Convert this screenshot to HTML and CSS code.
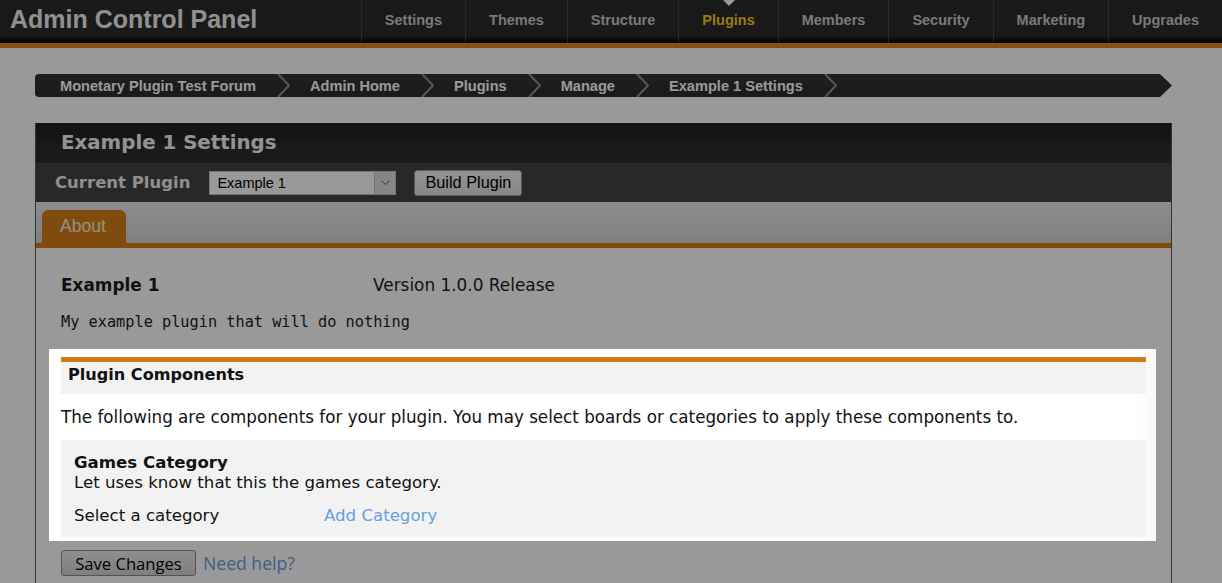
FILE: index.html
```html
<!DOCTYPE html>
<html lang="en">
<head>
<meta charset="utf-8">
<title>Admin Control Panel</title>
<link rel="stylesheet" href="styles.css">
</head>
<body>
<header class="topbar">
  <h1 class="brand">Admin Control Panel</h1>
  <nav class="mainnav">
    <a href="#">Settings</a>
    <a href="#">Themes</a>
    <a href="#">Structure</a>
    <a href="#" class="active">Plugins</a>
    <a href="#">Members</a>
    <a href="#">Security</a>
    <a href="#">Marketing</a>
    <a href="#">Upgrades</a>
  </nav>
</header>

<div class="page">
  <nav class="crumbs">
    <a class="crumb" href="#">Monetary Plugin Test Forum</a>
    <svg class="chev" viewBox="0 0 13 23"><polyline points="1,0 12,11.5 1,23" fill="none" stroke="#8f8f8f" stroke-width="2"/></svg>
    <a class="crumb" href="#">Admin Home</a>
    <svg class="chev" viewBox="0 0 13 23"><polyline points="1,0 12,11.5 1,23" fill="none" stroke="#8f8f8f" stroke-width="2"/></svg>
    <a class="crumb" href="#">Plugins</a>
    <svg class="chev" viewBox="0 0 13 23"><polyline points="1,0 12,11.5 1,23" fill="none" stroke="#8f8f8f" stroke-width="2"/></svg>
    <a class="crumb" href="#">Manage</a>
    <svg class="chev" viewBox="0 0 13 23"><polyline points="1,0 12,11.5 1,23" fill="none" stroke="#8f8f8f" stroke-width="2"/></svg>
    <a class="crumb" href="#">Example 1 Settings</a>
    <svg class="chev" viewBox="0 0 13 23"><polyline points="1,0 12,11.5 1,23" fill="none" stroke="#8f8f8f" stroke-width="2"/></svg>
  </nav>

  <section class="panel">
    <h2 class="panel-title">Example 1 Settings</h2>
    <div class="toolbar">
      <span class="toolbar-label">Current Plugin</span>
      <div class="select">
        <span class="select-value">Example 1</span>
        <span class="select-arrow"><svg width="9" height="6" viewBox="0 0 9 6"><polyline points="0.5,0.5 4.5,4.5 8.5,0.5" fill="none" stroke="#555" stroke-width="1"/></svg></span>
      </div>
      <button class="btn" type="button">Build Plugin</button>
    </div>
    <div class="tabs">
      <span class="tab">About</span>
    </div>
    <div class="panel-body">
      <div class="plugin-row">
        <span class="plugin-name">Example 1</span>
        <span class="plugin-version">Version 1.0.0 Release</span>
      </div>
      <p class="plugin-desc">My example plugin that will do nothing</p>

      <div class="spotlight">
        <div class="comp-head">Plugin Components</div>
        <p class="comp-intro">The following are components for your plugin. You may select boards or categories to apply these components to.</p>
        <div class="comp-item">
          <div class="comp-title">Games Category</div>
          <div class="comp-desc">Let uses know that this the games category.</div>
          <div class="comp-row">
            <span class="comp-label">Select a category</span>
            <a class="link" href="#">Add Category</a>
          </div>
        </div>
      </div>

      <div class="actions">
        <button class="btn-save" type="button">Save Changes</button>
        <a class="help" href="#">Need help?</a>
      </div>
    </div>
  </section>
</div>
</body>
</html>
```
FILE: styles.css
```css
html, body {
  margin: 0;
  background: #fff;
  font-family: "DejaVu Sans", Verdana, sans-serif;
  color: #1c1c1c;
  overflow: hidden;
}

/* ---------- top bar ---------- */
.topbar {
  display: flex;
  justify-content: space-between;
  height: 43px;
  background: linear-gradient(#2b2b2b 0, #2b2b2b 35px, #000 43px);
  border-bottom: 5px solid #e3861a;
}
.brand {
  margin: 0;
  padding-left: 10px;
  font: bold 25px/38px "Liberation Sans", Arial, sans-serif;
  color: #f0f0f0;
}
.mainnav {
  display: flex;
}
.mainnav a {
  position: relative;
  display: flex;
  align-items: center;
  padding: 0 23px 3px 23px;
  border-left: 1px solid #454545;
  font: bold 14.5px "Liberation Sans", Arial, sans-serif;
  color: #cacaca;
  text-decoration: none;
}
.mainnav a.active {
  color: #ffcc1b;
}
.mainnav a.active::before {
  content: "";
  position: absolute;
  top: 0;
  left: 50%;
  margin-left: -6px;
  border-left: 6px solid transparent;
  border-right: 6px solid transparent;
  border-top: 6px solid #fff;
}

/* ---------- page ---------- */
.page {
  padding: 26px 50px 0 35px;
}

.crumbs {
  display: flex;
  align-items: center;
  height: 23px;
  padding-left: 25px;
  background: linear-gradient(#343434, #2c2c2c);
  border-radius: 4px 0 0 4px;
  clip-path: polygon(0 0, calc(100% - 12px) 0, 100% 50%, calc(100% - 12px) 100%, 0 100%);
}
.crumb {
  font: bold 14.6px "Liberation Sans", Arial, sans-serif;
  color: #fff;
  text-decoration: none;
  white-space: nowrap;
}
.chev {
  width: 13px;
  height: 23px;
  margin: 0 20px 0 21px;
  flex: none;
}

/* ---------- panel ---------- */
.panel {
  margin-top: 26px;
  border-left: 1px solid #555;
  border-right: 1px solid #555;
}
.panel-title {
  margin: 0;
  height: 40px;
  padding-left: 25px;
  background: linear-gradient(#222 0, #252525 50%, #2c2c2c 50%, #2c2c2c 100%);
  font: bold 19.8px/40px "DejaVu Sans", Verdana, sans-serif;
  color: #f5f5f5;
}
.toolbar {
  display: flex;
  align-items: center;
  height: 39px;
  padding-left: 19px;
  background: #434343;
}
.toolbar-label {
  margin-right: 19px;
  font: bold 16.5px "DejaVu Sans", Verdana, sans-serif;
  color: #efefef;
}
.select {
  display: flex;
  box-sizing: border-box;
  width: 187px;
  height: 24px;
  border: 1px solid #c4c4c4;
  background: #fff;
}
.select-value {
  flex: 1;
  padding-left: 7px;
  font: 14.5px/23px "Liberation Sans", Arial, sans-serif;
  color: #000;
}
.select-arrow {
  display: flex;
  align-items: center;
  justify-content: center;
  width: 20px;
  background: #e0e0e0;
  border-left: 1px solid #c4c4c4;
}
.btn {
  height: 26px;
  margin-left: 18px;
  padding: 0 10px;
  border: 1px solid #9a9a9a;
  border-radius: 3px;
  background: linear-gradient(#f3f3f3, #e2e2e2);
  font: 16.3px "Liberation Sans", Arial, sans-serif;
  color: #000;
}

.tabs {
  display: flex;
  align-items: flex-end;
  height: 41px;
  padding-left: 6px;
  background: linear-gradient(#ececec, #d4d4d4);
  border-bottom: 5px solid #d47f16;
}
.tab {
  box-sizing: border-box;
  width: 84px;
  height: 33px;
  padding-left: 18px;
  background: #d47f16;
  border-radius: 6px 6px 0 0;
  font: 17.6px/32px "Liberation Sans", Arial, sans-serif;
  color: #f6f0e6;
}

.panel-body {
  padding: 27px 25px 60px 25px;
  background: #fff;
}
.plugin-row {
  display: flex;
  font-size: 16.9px;
  line-height: 20px;
}
.plugin-name {
  width: 312px;
  font-weight: bold;
}
.plugin-desc {
  margin: 17px 0 0;
  font: 15.25px/20px "DejaVu Sans Mono", "Liberation Mono", monospace;
}

/* highlighted area with dimmed surroundings */
.spotlight {
  position: relative;
  z-index: 5;
  margin: 17px -10px 0 -12px;
  padding: 8px 10px 4px 12px;
  background: linear-gradient(90deg, #fff 0, #fff calc(100% - 18px), #f7f7f7 100%);
  box-shadow: 0 0 0 3000px rgba(0, 0, 0, 0.4);
}
.comp-head {
  height: 29px;
  padding: 3px 7px 0;
  border-top: 5px solid #d27b12;
  background: #f2f2f2;
  font: bold 16.1px/20px "DejaVu Sans", Verdana, sans-serif;
  color: #111;
}
.comp-intro {
  margin: 0;
  padding: 13px 0;
  font-size: 16.75px;
  line-height: 20px;
  color: #111;
}
.comp-item {
  padding: 13px 13px 11px;
  background: #f2f2f2;
  font: 16.6px/20px "DejaVu Sans", Verdana, sans-serif;
  color: #111;
}
.comp-title {
  font-weight: bold;
}
.comp-row {
  display: flex;
  margin-top: 13px;
}
.comp-label {
  width: 250px;
}
.link {
  color: #65a0e4;
  text-decoration: none;
}

.actions {
  display: flex;
  align-items: center;
  gap: 7px;
  margin-top: 9px;
}
.btn-save {
  width: 135px;
  height: 26px;
  padding: 0;
  border: 1px solid #8a8a8a;
  border-radius: 3px;
  background: linear-gradient(#eeeeee, #d3d3d3);
  font: 16.6px "Open Sans", "Noto Sans", sans-serif;
  color: #000;
}
.help {
  font: 17.6px "Open Sans", "Noto Sans", sans-serif;
  color: #65a0e4;
  text-decoration: none;
}
```
